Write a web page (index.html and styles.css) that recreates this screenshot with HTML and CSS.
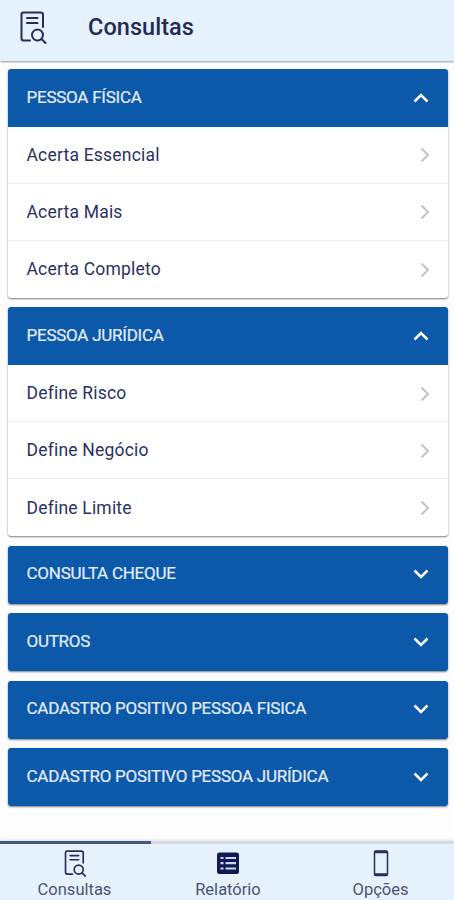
FILE: index.html
```html
<!DOCTYPE html>
<html lang="pt-BR">
<head>
<meta charset="utf-8">
<title>Consultas</title>
<link rel="stylesheet" href="styles.css">
</head>
<body>
<svg class="defs" aria-hidden="true">
  <symbol id="search-doc" viewBox="0 0 28 34">
    <path d="M11 30.500H4.500Q2.500 30.500 2.500 28V4.500Q2.500 2.500 4.500 2.500H21.500Q24 2.500 24 4.500V17M8 8H18.500M8 13H18.500"/>
    <circle cx="18.500" cy="25" r="5.500"/><path d="M22.500 29L26.500 33"/>
  </symbol>
  <symbol id="up" viewBox="0 0 16 10"><path d="M1.500 8.500L8 2L14.500 8.500"/></symbol>
  <symbol id="down" viewBox="0 0 16 10"><path d="M1.500 1.500L8 8L14.500 1.500"/></symbol>
  <symbol id="right" viewBox="0 0 10 16"><path d="M1.500 1.500L8 8L1.500 14.500"/></symbol>
</svg>
<div class="app">
  <header class="topbar">
    <svg class="doc"><use href="#search-doc"/></svg>
    <h1>Consultas</h1>
  </header>
  <main>
    <section class="card open">
      <div class="head"><span>PESSOA FÍSICA</span><svg class="chev"><use href="#up"/></svg></div>
      <div class="row"><span>Acerta Essencial</span><svg class="arrow"><use href="#right"/></svg></div>
      <div class="row"><span>Acerta Mais</span><svg class="arrow"><use href="#right"/></svg></div>
      <div class="row"><span>Acerta Completo</span><svg class="arrow"><use href="#right"/></svg></div>
    </section>
    <section class="card open">
      <div class="head"><span>PESSOA JURÍDICA</span><svg class="chev"><use href="#up"/></svg></div>
      <div class="row"><span>Define Risco</span><svg class="arrow"><use href="#right"/></svg></div>
      <div class="row"><span>Define Negócio</span><svg class="arrow"><use href="#right"/></svg></div>
      <div class="row"><span>Define Limite</span><svg class="arrow"><use href="#right"/></svg></div>
    </section>
    <section class="card"><div class="head"><span>CONSULTA CHEQUE</span><svg class="chev"><use href="#down"/></svg></div></section>
    <section class="card"><div class="head"><span>OUTROS</span><svg class="chev"><use href="#down"/></svg></div></section>
    <section class="card"><div class="head"><span>CADASTRO POSITIVO PESSOA FISICA</span><svg class="chev"><use href="#down"/></svg></div></section>
    <section class="card"><div class="head"><span>CADASTRO POSITIVO PESSOA JURÍDICA</span><svg class="chev"><use href="#down"/></svg></div></section>
  </main>
  <nav>
    <div class="tab active"><svg class="icon" viewBox="0 0 28 34"><use href="#search-doc"/></svg><span>Consultas</span></div>
    <div class="tab">
      <svg class="icon" viewBox="0 0 24 28"><rect class="fill" x="1" y="3.500" width="22" height="21.500" rx="2.500"/><path class="cut" d="M4.500 9H7.500M9.500 9H20M4.500 14.200H7.500M9.500 14.200H20M4.500 19.500H7.500M9.500 19.500H20"/></svg>
      <span>Relatório</span>
    </div>
    <div class="tab">
      <svg class="icon" viewBox="0 0 24 28"><rect class="phone" x="5.500" y="2" width="13" height="24.500" rx="1.500"/><path class="phone-bars" d="M6.500 3H17.500M6.500 25.500H17.500"/></svg>
      <span>Opções</span>
    </div>
  </nav>
</div>
</body>
</html>
```
FILE: styles.css
```css
* { box-sizing: border-box; }
body { margin: 0; background: #fdfdfd; font-family: Roboto, "Liberation Sans", sans-serif; color: #2b325f; }
svg { fill: none; stroke: #242d5b; stroke-linecap: round; stroke-linejoin: round; flex: none; }
.defs { position: absolute; width: 0; height: 0; }
.app { height: 900px; display: flex; flex-direction: column; overflow: hidden; }
.topbar { height: 61px; flex: none; background: #e5f2fb; display: flex; align-items: center; padding: 0 0 8px 19px; box-shadow: 0 1px 2px rgba(0,0,0,.4); }
.doc { width: 28px; height: 34px; stroke-width: 2; }
h1 { margin: 0 0 0 41px; font-size: 23.500px; line-height: 30px; font-weight: 500; letter-spacing: .05px; color: #252b55; }
main { flex: 1; padding: 8.200px 6px 0 7.500px; display: flex; flex-direction: column; gap: 9.700px; }
.card { background: #fff; border-radius: 3px; box-shadow: 0 1px 2px rgba(0,0,0,.5); overflow: hidden; flex: none; }
.open { margin-bottom: -.200px; }
.head { height: 57.800px; background: #0c58a9; display: flex; align-items: center; justify-content: space-between; padding: 0 19px 3px 19px; font-size: 17px; letter-spacing: -.25px; color: #e5edfa; -webkit-text-stroke: .2px #e5edfa; }
.chev { width: 16px; height: 10px; stroke: #fff; stroke-width: 2.500; stroke-linecap: butt; stroke-linejoin: miter; margin-top: 2px; }
.row { height: 57px; display: flex; align-items: center; justify-content: space-between; padding: 0 18.500px 0 19px; font-size: 17.500px; letter-spacing: .2px; border-bottom: 1px solid #eee; }
.row:last-child { border-bottom: 0; }
.arrow { width: 10px; height: 16px; stroke: #c4c4c4; stroke-width: 2; stroke-linecap: butt; stroke-linejoin: miter; margin-top: 1px; }
nav { height: 59px; flex: none; display: flex; background: #e5f2fb; box-shadow: 0 -1px 3px rgba(0,0,0,.12); }
.tab { flex: 0 0 151px; border-top: 3px solid #d6dae1; display: flex; flex-direction: column; align-items: center; padding: 5px 0 0 2px; font-size: 16.500px; line-height: 20px; color: #4b5474; }
.tab:nth-child(n+2) { flex-basis: 152px; }
.tab:last-child { flex: 1; padding-left: 4px; }
.active { border-top-color: #46577d; padding: 5px 2px 0 0; }
.icon { width: 24px; height: 28px; stroke-width: 2; }
.tab span { margin-top: 3px; }
.fill { fill: #111a52; stroke: none; }
.cut { stroke: #c9d7ea; stroke-width: 2.200; stroke-linecap: butt; }
.phone { stroke-width: 1.500; }
.phone-bars { stroke-width: 2.500; }
```
